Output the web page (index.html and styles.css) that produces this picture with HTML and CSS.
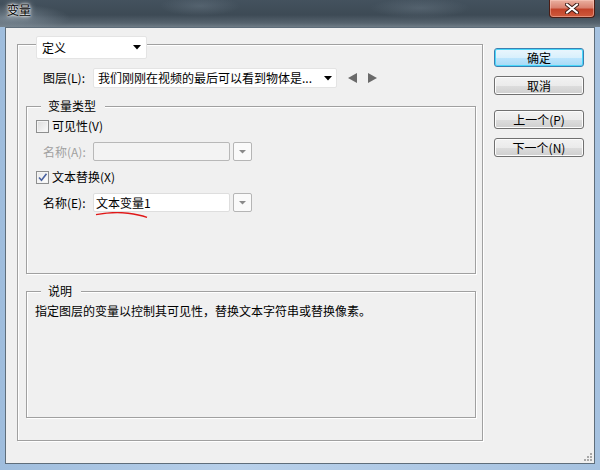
FILE: index.html
```html
<!DOCTYPE html>
<html lang="zh-CN">
<head>
  <meta charset="UTF-8">
  <meta name="viewport" content="width=device-width, initial-scale=1.0">
  <title>变量</title>
  <link rel="stylesheet" href="styles.css">
</head>
<body>
  <div class="window">
    <div class="titlebar">
      <span class="title">变量</span>
      <div class="close">
        <svg width="14" height="11" viewBox="0 0 14 11"><path d="M2 1.5l10 8M12 1.5l-10 8" stroke="#3a1a14" stroke-width="4" stroke-linecap="round"/><path d="M2 1.5l10 8M12 1.5l-10 8" stroke="#fff" stroke-width="2.2" stroke-linecap="round"/></svg>
      </div>
    </div>
    <div class="frame">
      <div class="client">
        <div class="main-group">
          <div class="select select-def">
            <span>定义</span>
            <svg class="arrow" width="8" height="5" viewBox="0 0 8 5"><path d="M0 0h8L4 4.5z"/></svg>
          </div>
          <div class="layer-row">
            <span class="label">图层(L):</span>
            <div class="select select-layer">
              <span>我们刚刚在视频的最后可以看到物体是...</span>
              <svg class="arrow" width="8" height="5" viewBox="0 0 8 5"><path d="M0 0h8L4 4.5z"/></svg>
            </div>
            <div class="nav">
              <svg width="9" height="10" viewBox="0 0 9 10"><path d="M9 0v10L0 5z"/></svg>
              <svg width="9" height="10" viewBox="0 0 9 10"><path d="M0 0v10l9-5z"/></svg>
            </div>
          </div>

          <div class="group group-type">
            <div class="group-title">变量类型</div>
            <div class="check-row">
              <span class="checkbox"></span>
              <span>可见性(V)</span>
            </div>
            <div class="field-row is-disabled">
              <span class="label">名称(A):</span>
              <div class="input"></div>
              <div class="drop-btn"><svg width="7" height="4" viewBox="0 0 7 4"><path d="M0 0h7L3.5 3.5z"/></svg></div>
            </div>
            <div class="check-row">
              <span class="checkbox is-checked">
                <svg width="11" height="11" viewBox="0 0 11 11"><path d="M2 5.5l2.5 2.8L9.5 1.8" fill="none" stroke="#4a62a0" stroke-width="1.6"/></svg>
              </span>
              <span>文本替换(X)</span>
            </div>
            <div class="field-row field-name">
              <span class="label">名称(E):</span>
              <div class="input">
                文本变量1
                <svg class="squiggle" width="54" height="7" viewBox="0 0 54 7"><path d="M1 2.6C12 0.6 26 0.4 33 1.2S46 3.2 52 5.4" fill="none" stroke="#e01818" stroke-width="1.4"/></svg>
              </div>
              <div class="drop-btn"><svg width="7" height="4" viewBox="0 0 7 4"><path d="M0 0h7L3.5 3.5z"/></svg></div>
            </div>
          </div>

          <div class="group group-desc">
            <div class="group-title">说明</div>
            <p class="desc">指定图层的变量以控制其可见性，替换文本字符串或替换像素。</p>
          </div>
        </div>

        <div class="buttons">
          <div class="btn is-default">确定</div>
          <div class="btn">取消</div>
          <div class="btn btn-gap">上一个(P)</div>
          <div class="btn">下一个(N)</div>
        </div>

        <svg class="grip" width="10" height="10" viewBox="0 0 10 10">
          <g fill="#a8a8a8">
            <rect x="8" y="2" width="2" height="2"/>
            <rect x="5" y="5" width="2" height="2"/><rect x="8" y="5" width="2" height="2"/>
            <rect x="2" y="8" width="2" height="2"/><rect x="5" y="8" width="2" height="2"/><rect x="8" y="8" width="2" height="2"/>
          </g>
        </svg>
      </div>
    </div>
  </div>
</body>
</html>
```
FILE: styles.css
```css
* {
  box-sizing: border-box;
}
body {
  margin: 0;
  width: 600px;
  height: 470px;
  overflow: hidden;
  font-family: "Noto Sans CJK SC", sans-serif;
  font-size: 12px;
  line-height: 16px;
  color: #000;
}

.window {
  display: flex;
  flex-direction: column;
  width: 600px;
  height: 470px;
  background: linear-gradient(90deg, #9fbddd, #b8d0ea 40%, #a6c2e0);
}

/* 标题栏 */
.titlebar {
  height: 27px;
  display: flex;
  justify-content: space-between;
  align-items: flex-start;
  background:
    radial-gradient(ellipse 60px 14px at 10px 18px, rgba(150, 165, 178, 0.6), transparent),
    radial-gradient(ellipse 40px 10px at 200px 6px, rgba(120, 135, 148, 0.35), transparent),
    radial-gradient(ellipse 50px 10px at 420px 8px, rgba(120, 135, 148, 0.35), transparent),
    linear-gradient(180deg, #44525e 0%, #3d4a55 55%, #56636e 85%, #6f7c86 100%);
}
.title {
  padding: 2px 0 0 7px;
  text-shadow: 0 0 6px #fff, 0 0 3px #fff, 0 0 2px #fff;
}
.close {
  width: 46px;
  height: 18px;
  margin-right: 5px;
  display: flex;
  align-items: center;
  justify-content: center;
  border: 1px solid #4a1c14;
  border-top: none;
  border-radius: 0 0 4px 4px;
  background: linear-gradient(180deg, #eab0a0 0%, #d98270 45%, #c2432a 55%, #cf5a3c 100%);
  box-shadow: inset 0 0 0 1px rgba(255, 210, 200, 0.45);
}

.frame {
  flex: 1;
  padding: 0 5px 6px 5px;
}
.client {
  position: relative;
  height: 100%;
  display: flex;
  align-items: flex-start;
  padding: 16px 0 0 11px;
  background: #f0f0f0;
  border: 1px solid #5f6e7b;
}

/* 刻线分组框 */
.main-group,
.group {
  border: 1px solid #a0a0a0;
  box-shadow: inset 1px 1px 0 #fff, 1px 1px 0 #fff;
}
.main-group {
  width: 466px;
  height: 397px;
  padding: 0 6px 0 8px;
}
.group-title {
  width: fit-content;
  margin: -9px 0 0 14px;
  padding: 0 9px 0 7px;
  background: #f0f0f0;
}

.select {
  display: flex;
  align-items: center;
  justify-content: space-between;
  background: #fff;
  border: 1px solid #e4e4e4;
  border-radius: 2px;
}
.select-def {
  width: 111px;
  height: 23px;
  margin: -9px 0 0 10px;
  padding: 0 5px 0 5px;
}
.select-layer {
  width: 244px;
  height: 20px;
  padding: 0 4px 0 4px;
}
.arrow {
  flex-shrink: 0;
}

.layer-row {
  display: flex;
  align-items: center;
  height: 20px;
  margin-top: 9px;
  padding-left: 17px;
}
.label {
  width: 50px;
  flex-shrink: 0;
}
.nav {
  display: flex;
  gap: 11px;
  margin-left: 11px;
  fill: #6a6a6a;
}

.group-type {
  height: 168px;
  margin-top: 18px;
}
.check-row {
  display: flex;
  align-items: center;
  gap: 3px;
  height: 16px;
  margin: 4px 0 0 9px;
}
.check-row + .field-row {
  margin-top: 8px;
}
.field-row + .check-row {
  margin-top: 8px;
}
.checkbox {
  width: 13px;
  height: 13px;
  display: flex;
  align-items: center;
  justify-content: center;
  border: 1px solid #8e8f8f;
  background: linear-gradient(135deg, #dcdcdc, #fbfbfb);
  box-shadow: inset 0 0 0 1px #f4f4f4;
}
.checkbox.is-checked {
  background: linear-gradient(135deg, #e8e8e8, #ffffff);
}

.field-row {
  display: flex;
  align-items: center;
  height: 19px;
  padding-left: 16px;
}
.field-name {
  margin-top: 7px;
}
.input {
  position: relative;
  width: 137px;
  height: 19px;
  padding-left: 2px;
  background: #fff;
  border: 1px solid #dedede;
  border-radius: 2px;
  line-height: 17px;
}
.is-disabled {
  color: #a0a0a0;
}
.is-disabled .input {
  background: #f3f3f3;
  border-color: #b8b8b8;
}
.drop-btn {
  width: 19px;
  height: 19px;
  margin-left: 3px;
  display: flex;
  align-items: center;
  justify-content: center;
  background: #fafafa;
  border: 1px solid #b5b5b5;
  border-radius: 2px;
  fill: #8a8a8a;
}
.squiggle {
  position: absolute;
  left: 1px;
  top: 18px;
}

.group-desc {
  height: 127px;
  margin-top: 17px;
}
.desc {
  margin: 4px 0 0 8px;
}

/* 右侧按钮 */
.buttons {
  width: 90px;
  margin: 4px 0 0 11px;
  display: flex;
  flex-direction: column;
  gap: 9px;
}
.btn {
  height: 19px;
  line-height: 17px;
  text-align: center;
  border: 1px solid #707070;
  border-radius: 3px;
  background: linear-gradient(180deg, #f2f2f2 0%, #ebebeb 50%, #dddddd 51%, #cfcfcf 100%);
  box-shadow: inset 0 0 0 1px #fcfcfc;
}
.btn.is-default {
  border-color: #3c7fb1;
  background: linear-gradient(180deg, #eaf6fd 0%, #d9f0fc 50%, #bee6fd 51%, #a7d9f5 100%);
  box-shadow: inset 0 0 0 1px #48d8fb;
}
.btn-gap {
  margin-top: 6px;
}

.grip {
  position: absolute;
  right: 2px;
  bottom: 2px;
}
```
